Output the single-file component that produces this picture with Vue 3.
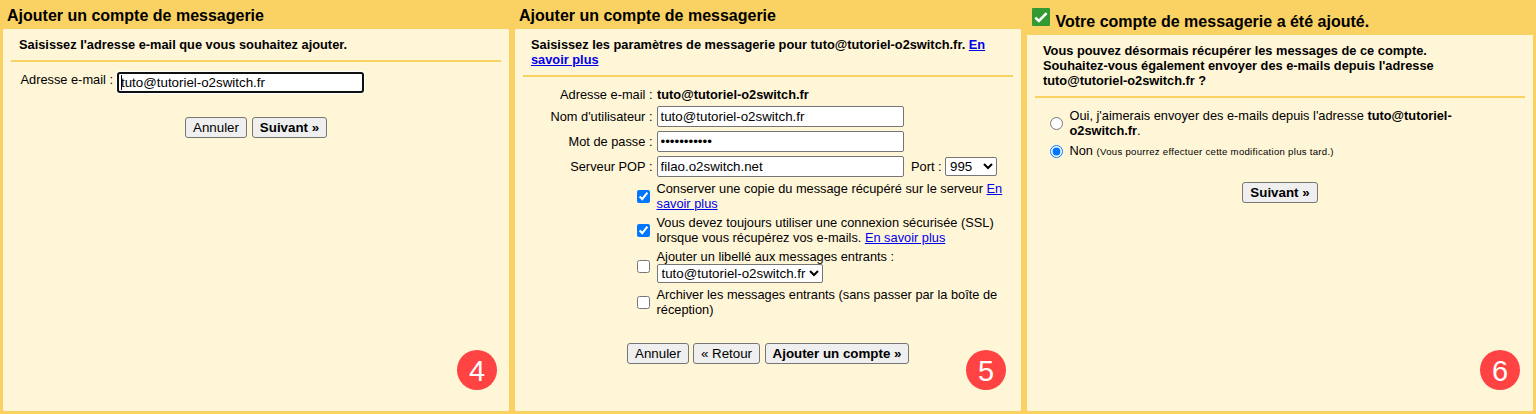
<script setup>
import { ref } from 'vue'

const email = ref('tuto@tutoriel-o2switch.fr')
const user = ref('tuto@tutoriel-o2switch.fr')
const password = ref('motdepasse1')
const server = ref('filao.o2switch.net')
const keepCopy = ref(true)
const useSsl = ref(true)
const addLabel = ref(false)
const archive = ref(false)
const alias = ref('non')
</script>

<template>
  <main class="steps">
    <section class="panel">
      <h1 class="title">Ajouter un compte de messagerie</h1>
      <div class="body">
        <p class="lead">Saisissez l'adresse e-mail que vous souhaitez ajouter.</p>
        <div class="email-row">
          <label>Adresse e-mail :</label>
          <span class="focus"><input v-model="email" type="text" /><i class="caret"></i></span>
        </div>
        <div class="actions first">
          <button class="w62">Annuler</button>
          <button class="w75 strong">Suivant »</button>
        </div>
      </div>
      <span class="badge">4</span>
    </section>

    <section class="panel">
      <h1 class="title">Ajouter un compte de messagerie</h1>
      <div class="body">
        <p class="lead">Saisissez les paramètres de messagerie pour tuto@tutoriel-o2switch.fr. <a>En</a><br /><a>savoir plus</a></p>
        <div class="form">
          <div class="row head"><label>Adresse e-mail :</label><b>tuto@tutoriel-o2switch.fr</b></div>
          <div class="row"><label>Nom d'utilisateur :</label><input v-model="user" type="text" /></div>
          <div class="row"><label>Mot de passe :</label><input v-model="password" type="password" /></div>
          <div class="row">
            <label>Serveur POP :</label><input v-model="server" type="text" />
            <span class="port">Port :</span>
            <select class="port-select"><option>995</option></select>
          </div>
        </div>
        <div class="options">
          <div class="option"><input v-model="keepCopy" type="checkbox" /><p>Conserver une copie du message récupéré sur le serveur <a>En</a><br /><a>savoir plus</a></p></div>
          <div class="option"><input v-model="useSsl" type="checkbox" /><p>Vous devez toujours utiliser une connexion sécurisée (SSL)<br />lorsque vous récupérez vos e-mails. <a>En savoir plus</a></p></div>
          <div class="option tall"><input v-model="addLabel" type="checkbox" /><p>Ajouter un libellé aux messages entrants :<select class="label-select"><option>tuto@tutoriel-o2switch.fr</option></select></p></div>
          <div class="option"><input v-model="archive" type="checkbox" /><p>Archiver les messages entrants (sans passer par la boîte de<br />réception)</p></div>
        </div>
        <div class="actions second">
          <button class="w62">Annuler</button>
          <button class="w67">« Retour</button>
          <button class="w144 strong">Ajouter un compte »</button>
        </div>
      </div>
      <span class="badge mid">5</span>
    </section>

    <section class="panel">
      <h1 class="title done">
        <svg width="18" height="18" viewBox="0 0 18 18">
          <rect width="18" height="18" rx="1" fill="#339933" />
          <path d="M3.3 9.6 6.9 13 14.6 5.2" fill="none" stroke="#fff" stroke-width="2.6" />
        </svg>
        <span>Votre compte de messagerie a été ajouté.</span>
      </h1>
      <div class="body">
        <p class="lead">Vous pouvez désormais récupérer les messages de ce compte.<br />Souhaitez-vous également envoyer des e-mails depuis l'adresse<br />tuto@tutoriel-o2switch.fr ?</p>
        <div class="choices">
          <div class="choice"><input v-model="alias" type="radio" value="oui" /><p>Oui, j'aimerais envoyer des e-mails depuis l'adresse <b>tuto@tutoriel-<br />o2switch.fr</b>.</p></div>
          <div class="choice"><input v-model="alias" type="radio" value="non" /><p>Non <small>(Vous pourrez effectuer cette modification plus tard.)</small></p></div>
        </div>
        <div class="actions third">
          <button class="w76 strong">Suivant »</button>
        </div>
      </div>
      <span class="badge">6</span>
    </section>
  </main>
</template>

<style>
body { margin: 0; overflow: hidden; }
</style>

<style scoped>
.steps {
  display: grid;
  grid-template-columns: repeat(3, 512px);
  width: 1536px;
  height: 414px;
  font: 12.8px/15px "Liberation Sans", Arial, sans-serif;
  color: #000;
  white-space: nowrap;
}
.steps * { box-sizing: border-box; }
p { margin: 0; }
a { color: #00e; text-decoration: underline; }
.panel {
  position: relative;
  display: flex;
  flex-direction: column;
  padding: 0 3px 3px;
  background: #fad163;
}
.title {
  margin: 0;
  height: 29px;
  padding: 7px 4px 0;
  font-size: 16px;
  line-height: 18px;
  font-weight: 700;
}
.done { display: flex; gap: 5.5px; height: 35px; padding: 8px 5px 0; }
.done span { padding-top: 5px; }
.body { flex: 1; padding: 8px 8px 0; background: #fff5d7; }
.lead {
  padding: 0 8px 8px;
  border-bottom: 2px solid #fad163;
  font-weight: 700;
}
input[type="text"], input[type="password"] {
  width: 247px;
  height: 21px;
  margin: 0;
  padding: 1px 2.5px;
  border: 1px solid #767676;
  border-radius: 2px;
  background: #fff;
  font: 13.333px "Liberation Sans", Arial, sans-serif;
  color: #000;
  outline: 0;
}
input[type="checkbox"], input[type="radio"] { width: 13px; height: 13px; margin: 0; }
.email-row { display: flex; padding: 10px 0 0 9.5px; gap: 4px; }
.email-row label { width: 92.5px; }
.focus { position: relative; display: flex; }
.focus input[type="text"] { border: 2px solid #101010; border-radius: 3px; padding: 0 2px; box-shadow: 0 0 0 1px #fff; }
.caret { position: absolute; left: 4px; top: 3px; width: 1px; height: 15px; background: #000; }
.actions { display: flex; }
.first { margin: 24px 0 0 174px; gap: 5px; }
.second { margin: 26px 0 0 104px; gap: 4px; }
.second button:last-child { margin-left: 1px; }
.third { margin: 23px 0 0 207px; }
button {
  height: 21px;
  padding: 0;
  border: 1px solid #767676;
  border-radius: 3px;
  background: #efefef;
  font: 13.333px/19px "Liberation Sans", Arial, sans-serif;
  color: #000;
}
.strong { font-weight: 700; }
.w62 { width: 62px; }
.w67 { width: 67px; }
.w75 { width: 75px; }
.w76 { width: 76px; }
.w144 { width: 144px; }
.form { display: grid; gap: 4px; padding-top: 10px; }
.row { display: flex; align-items: center; height: 21px; }
.row label { width: 129.5px; margin-right: 4.5px; text-align: right; }
.row.head { height: 15px; }
.port { width: 34px; margin-left: 7px; }
select {
  height: 19px;
  margin: 0;
  padding: 0;
  border: 1px solid #767676;
  border-radius: 2px;
  background-color: #fff;
  font: 13.333px "Liberation Sans", Arial, sans-serif;
  color: #000;
}
.port-select { width: 52px; }
.label-select { display: block; width: 166px; }
.options { display: grid; gap: 4px; padding: 4px 0 0 114px; }
.option { display: flex; align-items: center; gap: 6.5px; height: 30px; }
.option.tall { height: 34px; }
.choices { display: grid; gap: 5px; padding: 10px 0 0 15px; }
.choice { display: flex; align-items: center; gap: 6.5px; }
small { font-size: 9.6px; letter-spacing: 0.28px; }
.badge {
  position: absolute;
  right: 15px;
  top: 350px;
  width: 40px;
  height: 40px;
  border-radius: 50%;
  background: #ff4343;
  color: #fff;
  font: 29px/42px "Liberation Sans", Arial, sans-serif;
  text-align: center;
}
.mid { right: 18px; }
.panel:last-child .badge { right: 16px; }
</style>
